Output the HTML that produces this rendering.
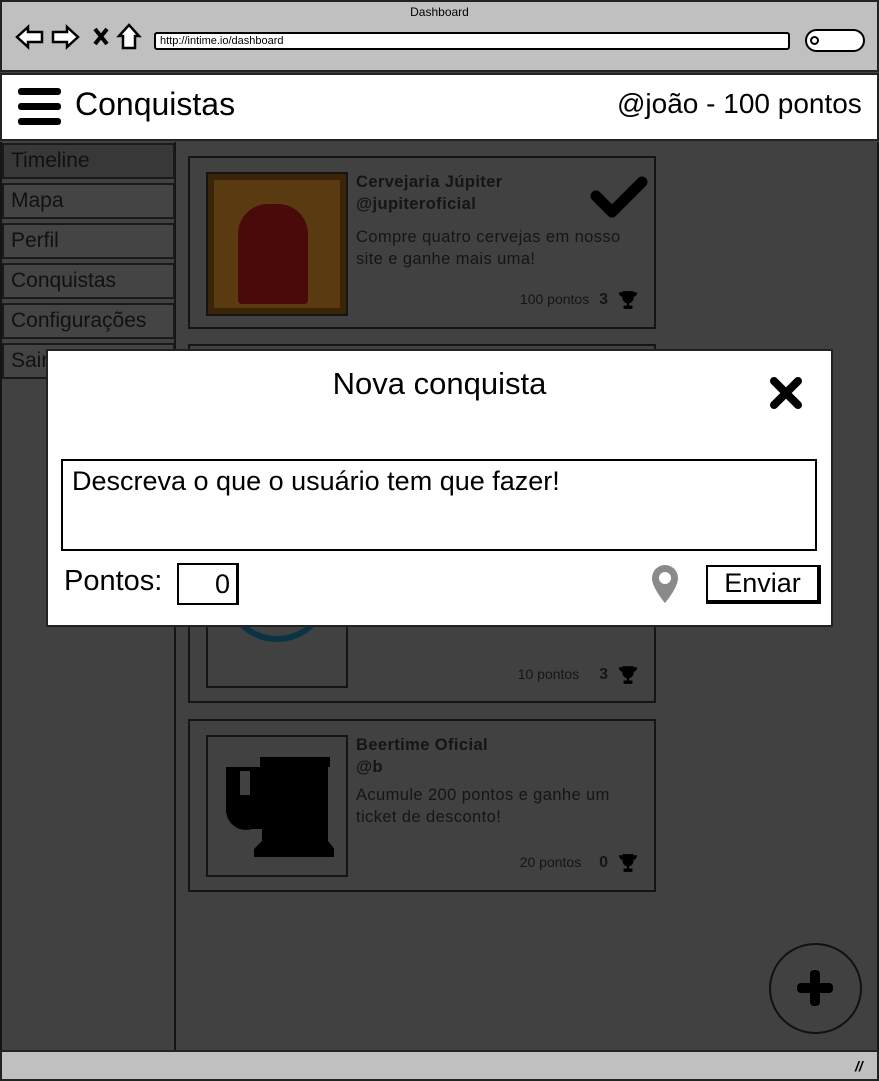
<!DOCTYPE html>
<html><head><meta charset="utf-8"><style>
*{box-sizing:border-box;margin:0;padding:0}
body{width:879px;height:1081px;position:relative;overflow:hidden;background:#414141;font-family:"Liberation Sans",sans-serif;color:#000}
.a{position:absolute}
.chrome{left:0;top:0;width:879px;height:72px;background:#c0c0c0;border:2px solid #222}
.hdr{left:0;top:73px;width:879px;height:68px;background:#fff;border:2px solid #222}
.side{border:2px solid #1a1a1a;background:#444;color:#111;font-size:21px;padding-left:7px;line-height:32px;left:2px;width:173px;height:36px}
.card{left:188px;width:468px;border:2px solid #151515;background:#414141}
.img{left:16px;width:142px;border:2px solid #151515}
.t{font-size:16.5px;color:#151515;letter-spacing:.4px}
.pts{font-size:14px;color:#151515;width:120px;text-align:right;left:298px}
.tr{width:20px;height:20px}
</style></head><body>
<div class="a chrome"></div>
<div class="a" style="left:0;top:5px;width:879px;text-align:center;font-size:12px">Dashboard</div>
<svg class="a" style="left:14px;top:22px" width="130" height="30" viewBox="0 0 130 30">
<path d="M3 15 L14 5 L14 10 L28 10 L28 20 L14 20 L14 25Z" fill="#fff" stroke="#000" stroke-width="2.5"/>
<path d="M64 15 L53 5 L53 10 L39 10 L39 20 L53 20 L53 25Z" fill="#fff" stroke="#000" stroke-width="2.5"/>
<path d="M81 7 L93 22 M93 7 L81 22" stroke="#000" stroke-width="4"/>
<path d="M105 14 L115 3 L125 14 L121 14 L121 26 L109 26 L109 14Z" fill="#fff" stroke="#000" stroke-width="2.5"/>
</svg>
<div class="a" style="left:154px;top:32px;width:636px;height:18px;background:#fff;border:2px solid #000;border-radius:3px;font-size:11px;padding-left:4px;line-height:14px">http://intime.io/dashboard</div>
<div class="a" style="left:805px;top:29px;width:60px;height:23px;background:#fff;border:2.5px solid #000;border-radius:12px"></div>
<div class="a" style="left:810px;top:36px;width:9px;height:9px;border:2px solid #000;border-radius:50%"></div>
<div class="a hdr"></div>
<div class="a" style="left:18px;top:88px;width:43px;height:7px;background:#000;border-radius:3px"></div>
<div class="a" style="left:18px;top:103px;width:43px;height:7px;background:#000;border-radius:3px"></div>
<div class="a" style="left:18px;top:118px;width:43px;height:7px;background:#000;border-radius:3px"></div>
<div class="a" style="left:75px;top:86px;font-size:32px">Conquistas</div>
<div class="a" style="left:617px;top:88px;font-size:28px">@joão - 100 pontos</div>
<div class="a" style="left:174px;top:142px;width:2px;height:908px;background:#151515"></div>
<div class="a" style="left:0;top:142px;width:2px;height:910px;background:#151515"></div>
<div class="a" style="left:877px;top:142px;width:2px;height:910px;background:#151515"></div>
<div class="a side" style="top:143px;background:#383838">Timeline</div>
<div class="a side" style="top:183px">Mapa</div>
<div class="a side" style="top:223px">Perfil</div>
<div class="a side" style="top:263px">Conquistas</div>
<div class="a side" style="top:303px">Configurações</div>
<div class="a side" style="top:343px">Sair</div>

<div class="a card" style="top:156px;height:173px">
 <div class="a img" style="top:14px;height:144px;background:#3a2408">
  <div class="a" style="left:6px;top:6px;width:126px;height:128px;background:#5a3a10"></div>
  <div class="a" style="left:30px;top:30px;width:70px;height:100px;background:#4a0a0a;border-radius:30px 30px 4px 4px"></div>
 </div>
 <div class="a t" style="left:166px;top:15px;font-weight:bold">Cervejaria Júpiter</div>
 <div class="a t" style="left:166px;top:37px;font-weight:bold">@jupiteroficial</div>
 <div class="a t" style="left:166px;top:68px;line-height:22px">Compre quatro cervejas em nosso<br>site e ganhe mais uma!</div>
 <svg class="a" style="left:400px;top:16px" width="58" height="46"><path d="M6 22 L22 38 L52 8" stroke="#000" stroke-width="11" fill="none" stroke-linejoin="round" stroke-linecap="round"/></svg>
 <div class="a pts" style="top:133px">100 pontos <b style="margin-left:6px;font-size:16px">3</b></div>
 <svg class="a tr" style="left:428px;top:132px" viewBox="0 0 18 18"><path d="M4 1h10v6a5 5 0 0 1-10 0zM1 2h3v4a3 3 0 0 1-3-3zM17 2h-3v4a3 3 0 0 0 3-3zM8 11h2v3h3v3H5v-3h3z" fill="#000"/></svg>
</div>

<div class="a card" style="top:344px;height:359px">
 <div class="a img" style="top:14px;height:328px;background:#414141">
  <div class="a" style="left:16px;top:200px;width:106px;height:80px;border-radius:0 0 60px 60px;border:6px solid #0a3444;border-top:none"></div>
 </div>
 <div class="a pts" style="top:320px">10 pontos <b style="margin-left:16px;font-size:16px">3</b></div>
 <svg class="a tr" style="left:428px;top:319px" viewBox="0 0 18 18"><path d="M4 1h10v6a5 5 0 0 1-10 0zM1 2h3v4a3 3 0 0 1-3-3zM17 2h-3v4a3 3 0 0 0 3-3zM8 11h2v3h3v3H5v-3h3z" fill="#000"/></svg>
</div>

<div class="a card" style="top:719px;height:173px">
 <div class="a img" style="top:14px;height:142px;background:#414141">
  <svg class="a" style="left:14px;top:18px" width="112" height="104" viewBox="0 0 112 104"><path d="M38 2H108V12H106V86L114 96V102H32V94L40 86V74H30A20 20 0 0 1 4 54V12H38ZM18 16V40H28V16Z" fill="#000"/></svg>
 </div>
 <div class="a t" style="left:166px;top:15px;font-weight:bold">Beertime Oficial</div>
 <div class="a t" style="left:166px;top:37px;font-weight:bold">@b</div>
 <div class="a t" style="left:166px;top:63px;line-height:22px">Acumule 200 pontos e ganhe um<br>ticket de desconto!</div>
 <div class="a pts" style="top:133px">20 pontos <b style="margin-left:14px;font-size:16px">0</b></div>
 <svg class="a tr" style="left:428px;top:132px" viewBox="0 0 18 18"><path d="M4 1h10v6a5 5 0 0 1-10 0zM1 2h3v4a3 3 0 0 1-3-3zM17 2h-3v4a3 3 0 0 0 3-3zM8 11h2v3h3v3H5v-3h3z" fill="#000"/></svg>
</div>

<div class="a" style="left:769px;top:943px;width:93px;height:91px;border:2px solid #111;border-radius:50%"></div>
<div class="a" style="left:810px;top:970px;width:10px;height:36px;background:#000;border-radius:4px"></div>
<div class="a" style="left:797px;top:983px;width:36px;height:10px;background:#000;border-radius:4px"></div>

<div class="a" style="left:0;top:1050px;width:879px;height:31px;background:#c0c0c0;border:2px solid #222"></div>
<div class="a" style="left:855px;top:1058px;font-size:14px;font-weight:bold;font-style:italic">//</div>

<div class="a" style="left:46px;top:349px;width:787px;height:278px;background:#fff;border:2px solid #222"></div>
<div class="a" style="left:46px;top:366px;width:787px;text-align:center;font-size:31px">Nova conquista</div>
<svg class="a" style="left:768px;top:376px" width="36" height="34"><path d="M6 5 L30 29 M30 5 L6 29" stroke="#000" stroke-width="8" stroke-linecap="round"/></svg>
<div class="a" style="left:61px;top:459px;width:756px;height:92px;border:2px solid #000;font-size:27px;padding:5px 9px">Descreva o que o usuário tem que fazer!</div>
<div class="a" style="left:64px;top:565px;font-size:29px">Pontos:</div>
<div class="a" style="left:177px;top:563px;width:62px;height:42px;border:2px solid #000;border-right-width:3px;font-size:27px;text-align:right;padding-right:6px;line-height:38px">0</div>
<svg class="a" style="left:650px;top:563px" width="30" height="42" viewBox="0 0 30 42"><path d="M15 2A13 13 0 0 0 2 15C2 25 15 40 15 40S28 25 28 15A13 13 0 0 0 15 2ZM15 9A6 6 0 1 1 15 21A6 6 0 1 1 15 9Z" fill="#8a8a8a"/></svg>
<div class="a" style="left:706px;top:565px;width:115px;height:39px;border:2px solid #000;border-right-width:4px;border-bottom-width:4px;font-size:27px;text-align:center;line-height:33px">Enviar</div>
</body></html>
